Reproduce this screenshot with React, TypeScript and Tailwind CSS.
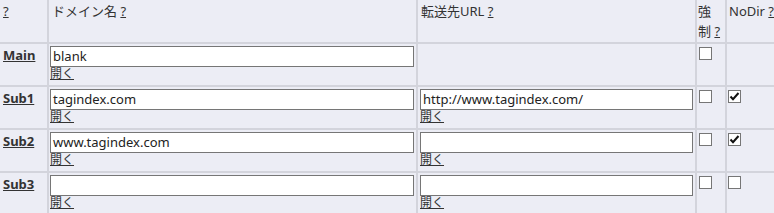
import React from "react";

type Row = {
  label: string;
  domain: string;
  url: string | null;
  nodir: boolean | null;
};

const rows: Row[] = [
  { label: "Main", domain: "blank", url: null, nodir: null },
  { label: "Sub1", domain: "tagindex.com", url: "http://www.tagindex.com/", nodir: true },
  { label: "Sub2", domain: "www.tagindex.com", url: "", nodir: true },
  { label: "Sub3", domain: "", url: "", nodir: false },
];

function Box({ checked }: { checked: boolean }) {
  return (
    <div className="relative w-[13px] h-[13px] border border-[#767676] bg-white">
      {checked && (
        <svg viewBox="0 0 13 13" className="absolute left-[-1px] top-[-1px] w-[13px] h-[13px]">
          <path d="M2.5 6.5 L5 9.2 L10.5 3" fill="none" stroke="#111" strokeWidth="2" />
        </svg>
      )}
    </div>
  );
}

function Field({ value, w }: { value: string; w: string }) {
  return (
    <div className={`h-[21px] ${w} border border-[#767676] bg-white pl-[2px] text-[13px] leading-[19px] text-[#222] whitespace-nowrap overflow-hidden`}>
      {value}
    </div>
  );
}

function Open() {
  return <a className="block text-[12px] leading-[14px] underline text-[#333] w-fit">開く</a>;
}

function Q() {
  return <span className="underline">?</span>;
}

export default function App() {
  const cell = "bg-[#ecedf5]";
  return (
    <div
      className="w-[774px] h-[213px] grid grid-cols-[47px_367px_277px_28px_47px] grid-rows-[42px_41px_41px_41px_40px] gap-[2px] bg-[#d3d4dc] text-[#333] text-[13px]"
      style={{ fontFamily: '"Noto Sans", "Noto Sans CJK JP", sans-serif' }}
    >
      <div className={`${cell} px-[3px] pt-[1px] leading-[20px]`}><Q /></div>
      <div className={`${cell} px-[3px] pt-[1px] leading-[20px]`}>ドメイン名 <Q /></div>
      <div className={`${cell} px-[3px] pt-[1px] leading-[20px]`}>転送先URL <Q /></div>
      <div className={`${cell} pl-[1px] pt-[1px] leading-[20px]`}>強<br />制 <Q /></div>
      <div className={`${cell} pl-[2px] pt-[1px] leading-[20px] whitespace-nowrap overflow-hidden`}>NoDir <Q /></div>
      {rows.map((r) => (
        <React.Fragment key={r.label}>
          <div className={`${cell} pl-[3px] pt-[1px] leading-[20px]`}>
            <a className="font-bold underline text-[#333]">{r.label}</a>
          </div>
          <div className={`${cell} pl-[1px] pt-[2px]`}>
            <Field value={r.domain} w="w-[364px]" />
            <Open />
          </div>
          <div className={`${cell} pl-[2px] pt-[2px]`}>
            {r.url !== null && (
              <>
                <Field value={r.url} w="w-[273px]" />
                <Open />
              </>
            )}
          </div>
          <div className={`${cell} pl-[2px] pt-[3px]`}>
            <Box checked={false} />
          </div>
          <div className={`${cell} pl-[1px] pt-[3px]`}>
            {r.nodir !== null && <Box checked={r.nodir} />}
          </div>
        </React.Fragment>
      ))}
    </div>
  );
}
